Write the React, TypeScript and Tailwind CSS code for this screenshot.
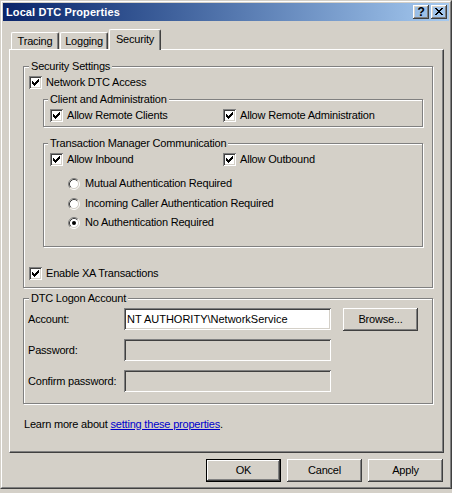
import React from "react";

// classic 3d bevels
const sunken =
  "shadow-[inset_1px_1px_0_#808080,inset_-1px_-1px_0_#ffffff,inset_2px_2px_0_#404040,inset_-2px_-2px_0_#d4d0c8]";
const raised =
  "shadow-[inset_-1px_-1px_0_#404040,inset_1px_1px_0_#ffffff,inset_-2px_-2px_0_#808080,inset_2px_2px_0_#d4d0c8]";

const CheckBox = () => (
  <span className={`block w-[13px] h-[13px] shrink-0 bg-white ${sunken}`}>
    <svg width="13" height="13" viewBox="0 0 13 13" shapeRendering="crispEdges" className="block">
      <path
        d="M3 5h1v3H3zM4 6h1v3H4zM5 7h1v3H5zM6 6h1v3H6zM7 5h1v3H7zM8 4h1v3H8zM9 3h1v3H9z"
        fill="#000"
      />
    </svg>
  </span>
);

const Radio = ({ on }: { on?: boolean }) => (
  <svg width="12" height="12" viewBox="0 0 12 12" className="block shrink-0">
    <circle cx="6" cy="6" r="4.5" fill="#fff" />
    <path d="M2.11 9.89A5.5 5.5 0 0 1 9.89 2.11" stroke="#808080" fill="none" />
    <path d="M9.89 2.11A5.5 5.5 0 0 1 2.11 9.89" stroke="#fff" fill="none" />
    <path d="M2.82 9.18A4.5 4.5 0 0 1 9.18 2.82" stroke="#404040" fill="none" />
    <path d="M9.18 2.82A4.5 4.5 0 0 1 2.82 9.18" stroke="#d4d0c8" fill="none" />
    {on && <circle cx="6" cy="6" r="2" fill="#000" />}
  </svg>
);

const Group = ({
  label,
  className,
  legendClass,
  children,
}: {
  label: string;
  className: string;
  legendClass: string;
  children: React.ReactNode;
}) => (
  <fieldset className={`block border border-[#808080] shadow-[inset_1px_1px_0_#fff,1px_1px_0_#fff] ${className}`}>
    <legend className={`px-[2px] bg-[#d4d0c8] leading-[13px] ${legendClass}`}>{label}</legend>
    {children}
  </fieldset>
);

const Tab = ({ label }: { label: string }) => (
  <div className="h-[17px] w-[48px] flex justify-center pt-[2px] border-t border-l border-r border-t-white border-l-white border-r-[#404040] rounded-t-[2px] shadow-[inset_-1px_0_0_#808080]">
    {label}
  </div>
);

export default function App() {
  return (
    <div className="w-[452px] h-[493px] bg-[#d4d0c8] font-['Liberation_Sans',Arial,sans-serif] text-[11px] leading-[13px] text-black tracking-[-0.2px]">
      <div className="h-[489px] w-[452px] border border-t-[#d4d0c8] border-l-[#d4d0c8] border-r-[#404040] border-b-[#404040]">
        <div className="h-full border border-t-white border-l-white border-r-[#808080] border-b-[#808080] p-[1px] flex flex-col">
          {/* Title bar */}
          <div className="h-[18px] shrink-0 flex items-center bg-linear-to-r from-[#0a246a] to-[#a6caf0] pl-[3px] pr-[2px]">
            <span className="flex-1 text-white font-bold tracking-[0.1px]">Local DTC Properties</span>
            <div className={`w-[16px] h-[14px] flex items-center justify-center font-bold text-[12px] leading-[12px] ${raised}`}>
              ?
            </div>
            <div className={`ml-[2px] w-[16px] h-[14px] flex items-center justify-center ${raised}`}>
              <svg width="8" height="7" viewBox="0 0 8 7" shapeRendering="crispEdges" className="block -mt-[1px]">
                <path
                  d="M0 0h2v1H0zM6 0h2v1H6zM1 1h2v1H1zM5 1h2v1H5zM2 2h4v1H2zM3 3h2v1H3zM2 4h4v1H2zM1 5h2v1H1zM5 5h2v1H5zM0 6h2v1H0zM6 6h2v1H6z"
                  fill="#000"
                />
              </svg>
            </div>
          </div>

          <div className="flex-1 pl-[6px] pr-[5px] pt-[8px]">
            {/* Tabs */}
            <div className="flex items-end h-[20px] pl-[2px] gap-[1px]">
              <Tab label="Tracing" />
              <Tab label="Logging" />
              <div className="relative z-10 -mb-[1px] h-[21px] w-[52px] flex justify-center pt-[3px] bg-[#d4d0c8] border-t border-l border-r border-t-white border-l-white border-r-[#404040] rounded-t-[2px] shadow-[inset_-1px_0_0_#808080]">
                Security
              </div>
            </div>

            {/* Panel */}
            <div className="h-[404px] border border-t-white border-l-white border-r-[#404040] border-b-[#404040] shadow-[inset_-1px_-1px_0_#808080]">
              <Group
                label="Security Settings"
                className="ml-[13px] mt-[10px] w-[410px] h-[228px]"
                legendClass="ml-[5px]"
              >
                <div className="flex items-center gap-[4px] h-[13px] mt-[3px] ml-[5px]">
                  <CheckBox />
                  <span>Network DTC Access</span>
                </div>

                <Group
                  label="Client and Administration"
                  className="ml-[19px] mt-[4px] w-[380px] h-[34px]"
                  legendClass="ml-[4px]"
                >
                  <div className="flex items-center h-[13px] mt-[3px] ml-[6px]">
                    <div className="w-[173px] flex items-center gap-[4px]">
                      <CheckBox />
                      <span>Allow Remote Clients</span>
                    </div>
                    <div className="flex items-center gap-[4px]">
                      <CheckBox />
                      <span>Allow Remote Administration</span>
                    </div>
                  </div>
                </Group>

                <Group
                  label="Transaction Manager Communication"
                  className="ml-[19px] mt-[10px] w-[380px] h-[110px]"
                  legendClass="ml-[4px]"
                >
                  <div className="flex items-center h-[13px] mt-[3px] ml-[6px]">
                    <div className="w-[173px] flex items-center gap-[4px]">
                      <CheckBox />
                      <span>Allow Inbound</span>
                    </div>
                    <div className="flex items-center gap-[4px]">
                      <CheckBox />
                      <span>Allow Outbound</span>
                    </div>
                  </div>
                  <div className="flex items-center gap-[5px] h-[13px] mt-[11px] ml-[24px]">
                    <Radio />
                    <span>Mutual Authentication Required</span>
                  </div>
                  <div className="flex items-center gap-[5px] h-[13px] mt-[7px] ml-[24px]">
                    <Radio />
                    <span>Incoming Caller Authentication Required</span>
                  </div>
                  <div className="flex items-center gap-[5px] h-[13px] mt-[6px] ml-[24px]">
                    <Radio on />
                    <span>No Authentication Required</span>
                  </div>
                </Group>

                <div className="flex items-center gap-[4px] h-[13px] mt-[20px] ml-[5px]">
                  <CheckBox />
                  <span>Enable XA Transactions</span>
                </div>
              </Group>

              <Group
                label="DTC Logon Account"
                className="ml-[13px] mt-[4px] w-[410px] h-[112px]"
                legendClass="ml-[5px]"
              >
                <div className="flex items-start mt-[3px] ml-[4px]">
                  <span className="w-[96px] h-[22px] flex items-center">Account:</span>
                  <input
                    readOnly
                    value={"NT AUTHORITY\\NetworkService"}
                    className={`w-[207px] h-[22px] bg-white pl-[3px] outline-none tracking-normal ${sunken}`}
                  />
                  <button className={`ml-[12px] w-[75px] h-[23px] bg-[#d4d0c8] ${raised}`}>Browse...</button>
                </div>
                <div className="flex items-start mt-[8px] ml-[4px]">
                  <span className="w-[96px] h-[22px] flex items-center">Password:</span>
                  <div className={`w-[207px] h-[22px] bg-[#d4d0c8] ${sunken}`} />
                </div>
                <div className="flex items-start mt-[9px] ml-[4px]">
                  <span className="w-[96px] h-[22px] flex items-center">Confirm password:</span>
                  <div className={`w-[207px] h-[22px] bg-[#d4d0c8] ${sunken}`} />
                </div>
              </Group>

              <p className="mt-[14px] ml-[14px]">
                Learn more about{" "}
                <span className="text-[#0000cc] underline underline-offset-[1px]">setting these properties</span>.
              </p>
            </div>

            {/* Dialog buttons */}
            <div className="flex justify-end gap-[6px] mt-[6px] mr-[1px]">
              <button className={`w-[75px] h-[23px] border border-black bg-[#d4d0c8] ${raised}`}>OK</button>
              <button className={`w-[75px] h-[23px] bg-[#d4d0c8] ${raised}`}>Cancel</button>
              <button className={`w-[75px] h-[23px] bg-[#d4d0c8] ${raised}`}>Apply</button>
            </div>
          </div>
        </div>
      </div>
    </div>
  );
}
